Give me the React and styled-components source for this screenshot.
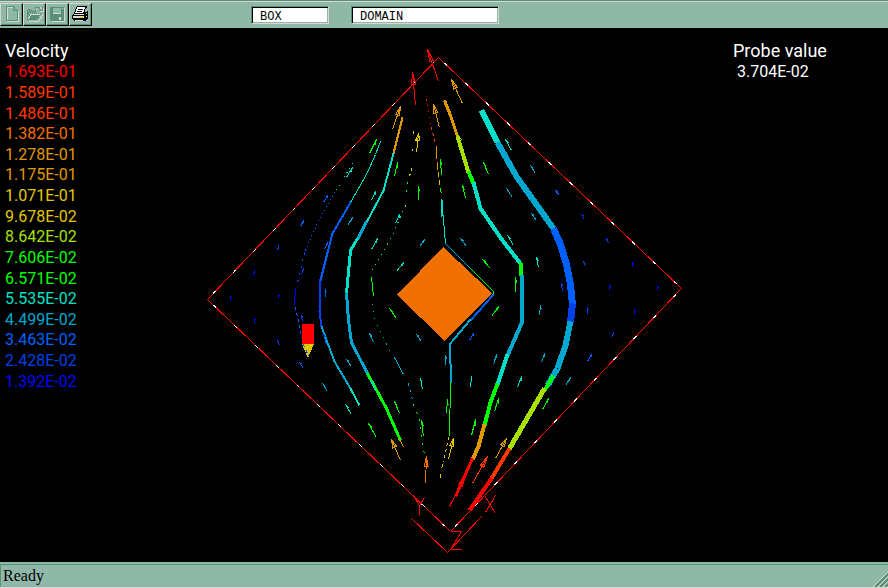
import React from "react";
import styled, { createGlobalStyle } from "styled-components";

const C = {
  red: "#ff0000",
  verm: "#ff3800",
  dorange: "#f07000",
  orange: "#e09800",
  yellow: "#e0c800",
  lime: "#a8e000",
  green: "#00ff00",
  teal: "#00e0c8",
  cyan: "#00a8d0",
  blue: "#0060ff",
  royal: "#0040e8",
  navy: "#0000ff",
};

const face = "#90b8a8";
const shade = "#589078";
const light = "#d8d8d0";

const GlobalStyle = createGlobalStyle`
  html, body { margin: 0; background: #000; }
  * { box-sizing: border-box; }
`;

const Window = styled.div`
  display: flex;
  flex-direction: column;
  height: 100vh;
  background: #000;
`;

const Toolbar = styled.header`
  display: flex;
  align-items: flex-start;
  height: 28px;
  padding-top: 2px;
  background: ${face};
  border-top: 1px solid ${shade};
  box-shadow: inset 0 1px 0 ${light};
`;

const ButtonRow = styled.div`
  display: flex;
  width: 92px;
`;

const ToolButton = styled.button`
  display: block;
  width: 23px;
  height: 23px;
  padding: 0;
  background: ${face};
  border: 1px solid;
  border-color: ${light} #000 #000 ${light};
  box-shadow: inset -1px -1px 0 ${shade};
`;

const Icon = styled.svg`
  display: block;
  width: 21px;
  height: 21px;
  shape-rendering: crispEdges;
`;

const Fields = styled.div`
  display: flex;
  gap: 22px;
  margin-left: 159px;
  padding-top: 3px;
`;

const Field = styled.input`
  width: ${(p) => p.$width}px;
  height: 18px;
  padding: 3px 0 0 8px;
  border: 1px solid;
  border-color: ${shade} ${light} ${light} ${shade};
  border-radius: 0;
  outline: 0;
  background: #fff;
  box-shadow: inset 1px 1px 0 #000, inset -1px -1px 0 ${face};
  color: #000;
  font: 12px "Liberation Mono", monospace;
`;

const Viewport = styled.main`
  flex: 1;
  min-height: 0;
  display: grid;
  grid-template-columns: 200px minmax(0, 1fr) 160px;
  background: #000;
  color: #fff;
  font: 18px/20px Roboto, "Liberation Sans", sans-serif;
`;

const Legend = styled.section`
  padding: 13px 0 0 5px;
`;

const Heading = styled.h2`
  margin: 0;
  font: inherit;
`;

const Scale = styled.ul`
  display: grid;
  grid-auto-rows: 1fr;
  align-items: center;
  height: 330px;
  margin: 1px 0 0;
  padding: 0;
  list-style: none;
`;

const Level = styled.li`
  color: ${(p) => p.$color};
  font-size: 16px;
`;

const Plot = styled.svg`
  display: block;
  width: 100%;
  height: 100%;
  min-height: 0;
  shape-rendering: crispEdges;
  fill: none;
`;

const Probe = styled.section`
  padding: 13px 0 0 5px;
`;

const ProbeValue = styled.output`
  display: block;
  margin-top: 1px;
  padding-left: 4px;
  font-size: 16px;
`;

const StatusBar = styled.footer`
  display: flex;
  align-items: flex-end;
  justify-content: space-between;
  height: 26px;
  padding-top: 2px;
  background: ${face};
  border-bottom: 1px solid ${light};
  font: 16px/22px "Liberation Serif", serif;
  color: #000;
`;

const StatusText = styled.div`
  flex: 1;
  height: 23px;
  padding-left: 2px;
  border-top: 1px solid ${shade};
  border-left: 1px solid ${shade};
`;

const Grip = styled.svg`
  width: 16px;
  height: 23px;
  border-top: 1px solid ${shade};
  shape-rendering: crispEdges;
`;

const levels = [
  ["1.693E-01", C.red],
  ["1.589E-01", C.verm],
  ["1.486E-01", C.verm],
  ["1.382E-01", C.dorange],
  ["1.278E-01", C.orange],
  ["1.175E-01", C.orange],
  ["1.071E-01", C.yellow],
  ["9.678E-02", C.yellow],
  ["8.642E-02", C.lime],
  ["7.606E-02", C.green],
  ["6.571E-02", C.green],
  ["5.535E-02", C.teal],
  ["4.499E-02", C.cyan],
  ["3.463E-02", C.blue],
  ["2.428E-02", C.royal],
  ["1.392E-02", C.navy],
];

// Ribbon pieces: colour, width, points, optional dash pattern.
const streams = [
  ["teal", 6, "481,110 497,142"],
  ["cyan", 6, "497,142 516,176 553,228"],
  ["blue", 7, "553,228 560,244 566,264 570,284 572,305"],
  ["royal", 7, "572,303 570,322"],
  ["cyan", 6, "570,321 565,345 557,368 547,385"],
  ["green", 4, "553,375 544,390"],
  ["lime", 5, "544,388 509,448"],
  ["verm", 4, "509,448 491,478"],
  ["red", 4, "491,478 469,510"],

  ["orange", 3, "444,100 450,115 457,136"],
  ["lime", 4, "457,136 468,172"],
  ["green", 4, "468,171 473,183"],
  ["teal", 4, "473,182 480,208 502,240 520,263"],
  ["green", 4, "520,262 521,275"],
  ["cyan", 4, "521,274 521,323 507,355"],
  ["teal", 4, "507,354 497,384"],
  ["green", 4, "497,383 490,402 484,425"],
  ["orange", 4, "484,424 478,446 472,459"],
  ["red", 3, "472,458 455,496"],

  ["red", 1, "426,99 428,114 431,128", "1 5"],
  ["verm", 1, "431,127 435,144", "3 3"],
  ["orange", 1, "436,146 437,170", "13 3"],
  ["yellow", 1, "438,172 440,188", "5 3"],
  ["green", 1, "440,188 441,195", "5 3"],
  ["teal", 2, "441,199 442,216"],
  ["teal", 1, "442,208 445,243"],
  ["cyan", 1, "445,243 470,268"],
  ["green", 1, "470,268 493,291 493,294"],
  ["blue", 2, "493,294 470,320"],
  ["cyan", 2, "470,319 449,344"],
  ["cyan", 2, "449,344 451,383"],
  ["green", 1, "450,382 449,436"],
  ["yellow", 1, "448,437 443,462", "3 3"],
  ["yellow", 1, "442,464 439,480", "4 6"],

  ["orange", 2, "402,117 393,153"],
  ["teal", 2, "393,153 383,190 366,222"],
  ["cyan", 3, "366,221 357,239"],
  ["teal", 3, "357,238 350,250 346,293"],
  ["cyan", 3, "346,293 348,320 351,342 367,373"],
  ["green", 3, "367,373 386,408 400,440"],
  ["orange", 1, "399,438 403,447"],

  ["teal", 1, "380,141 375,154 366,174 350,202"],
  ["blue", 2, "350,202 332,233 327,252 320,280"],
  ["royal", 2, "320,279 319,311 321,326"],
  ["cyan", 2, "321,326 334,361 350,388"],
  ["teal", 2, "350,388 359,405"],

  ["teal", 1, "352,163 335,191", "1 4"],
  ["blue", 1, "334,192 318,220 304,252", "1 3"],
  ["royal", 1, "304,252 300,270 296,286", "2 5"],
  ["navy", 1, "295,288 294,305"],
  ["blue", 1, "295,307 303,345 308,358", "3 3"],

  ["yellow", 1, "413,131 412,151", "3 15"],
  ["yellow", 1, "411,168 408,180", "2 4"],
  ["green", 1, "407,182 406,198", "2 6"],
  ["teal", 1, "405,205 390,239 371,270", "1 5"],
  ["green", 1, "371,277 373,296"],
  ["cyan", 1, "372,304 374,320 378,327 391,353", "1 6"],
  ["cyan", 1, "394,357 403,374"],
  ["cyan", 1, "408,383 413,404", "2 5"],
  ["green", 1, "413,404 419,419 424,455", "2 6"],
];

// Velocity vectors: colour, tail x, tail y, head x, head y.
const vectors = [
  ["red", 438, 81, 427, 49], ["red", 415, 105, 412, 72],
  ["orange", 392, 129, 400, 106], ["orange", 439, 127, 433, 104],
  ["orange", 462, 103, 451, 79], ["lime", 463, 151, 457, 134],
  ["yellow", 416, 152, 418, 133], ["green", 369, 153, 376, 139],
  ["green", 394, 176, 397, 162], ["green", 441, 175, 440, 159],
  ["green", 418, 199, 418, 186], ["green", 488, 174, 483, 162],
  ["green", 465, 198, 462, 185], ["teal", 346, 177, 352, 167],
  ["teal", 371, 200, 375, 191], ["teal", 395, 223, 399, 214],
  ["teal", 511, 150, 505, 139], ["cyan", 535, 173, 530, 165],
  ["cyan", 512, 197, 506, 188], ["cyan", 536, 220, 531, 213],
  ["cyan", 347, 225, 352, 217], ["teal", 513, 245, 507, 235],
  ["blue", 323, 202, 327, 195], ["blue", 300, 226, 303, 220],
  ["royal", 277, 250, 278, 246], ["navy", 253, 275, 254, 271],
  ["navy", 230, 299, 230, 296], ["navy", 278, 297, 278, 294],
  ["royal", 301, 274, 303, 268], ["blue", 324, 249, 327, 242],
  ["blue", 325, 296, 325, 289], ["teal", 371, 249, 377, 238],
  ["navy", 254, 322, 254, 318], ["royal", 279, 345, 277, 340],
  ["blue", 303, 368, 299, 362], ["royal", 302, 321, 301, 315],
  ["cyan", 327, 391, 322, 383], ["teal", 351, 414, 345, 404],
  ["green", 376, 437, 368, 423], ["orange", 400, 460, 391, 439],
  ["green", 396, 318, 389, 308], ["cyan", 373, 342, 369, 333],
  ["cyan", 351, 366, 346, 359], ["teal", 375, 390, 370, 380],
  ["green", 399, 413, 394, 401], ["blue", 326, 344, 323, 333],
  ["teal", 396, 271, 403, 262], ["cyan", 419, 246, 424, 239],
  ["cyan", 466, 246, 460, 238], ["green", 490, 268, 482, 259],
  ["teal", 538, 267, 536, 257], ["green", 515, 291, 515, 277],
  ["green", 491, 316, 498, 306], ["cyan", 539, 315, 540, 305],
  ["royal", 562, 291, 561, 283], ["royal", 585, 266, 583, 261],
  ["royal", 587, 313, 587, 308], ["cyan", 421, 341, 416, 334],
  ["blue", 469, 340, 473, 333], ["cyan", 445, 364, 445, 355],
  ["cyan", 493, 364, 496, 354], ["cyan", 541, 362, 544, 353],
  ["teal", 422, 389, 420, 378], ["teal", 470, 387, 471, 376],
  ["teal", 517, 387, 521, 376], ["cyan", 565, 385, 570, 377],
  ["blue", 587, 361, 591, 354], ["green", 423, 436, 421, 420],
  ["green", 446, 413, 447, 399], ["green", 471, 435, 475, 419],
  ["green", 494, 411, 498, 398], ["green", 542, 409, 548, 398],
  ["yellow", 448, 459, 453, 438], ["orange", 495, 458, 506, 438],
  ["dorange", 425, 483, 426, 456], ["verm", 472, 483, 487, 456],
  ["red", 449, 506, 466, 473], ["blue", 559, 195, 555, 190],
  ["royal", 584, 219, 581, 214], ["royal", 608, 243, 606, 238],
  ["navy", 632, 266, 632, 262], ["navy", 657, 289, 657, 286],
  ["navy", 609, 289, 609, 285], ["navy", 634, 313, 634, 309],
  ["royal", 611, 337, 613, 332],
];

// Shaft plus a slim open head; short vectors get a single barb.
function vectorPath([, x1, y1, x2, y2]) {
  const dx = x2 - x1;
  const dy = y2 - y1;
  const len = Math.hypot(dx, dy);
  const shaft = `M${x1} ${y1}L${x2} ${y2}`;
  const side = len > 18 ? 2 : 1;
  const bx = x2 - dx * 0.36;
  const by = y2 - dy * 0.36;
  const nx = (-dy / len) * side;
  const ny = (dx / len) * side;
  if (len < 18) return `${shaft}L${bx + nx} ${by + ny}`;
  return `${shaft}L${bx + nx} ${by + ny}L${bx - nx} ${by - ny}L${x2} ${y2}`;
}

const edges = [
  "M207 299L438 57",
  "M438 57L681 288",
  "M681 288L450 531",
  "M207 299L450 531",
];

function FlowPlot() {
  return (
    <Plot viewBox="200 28 528 534" role="img" aria-label="Velocity streamlines around a square box">
      <path d="M443 247L492 293L445 341L397 295Z" fill={C.dorange} />
      <g transform="translate(.5 .5)">
        {edges.map((d) => (
          <g key={d}>
            <path d={d} stroke={C.red} />
            <path d={d} stroke="#fff" strokeDasharray="4 24.8" strokeDashoffset="-8" />
          </g>
        ))}
        {streams.map(([c, w, pts, dash]) => (
          <polyline key={c + pts} points={pts} stroke={C[c]} strokeWidth={w} strokeDasharray={dash} />
        ))}
        {vectors.map((v) => (
          <path key={v.join()} d={vectorPath(v)} stroke={C[v[0]]} />
        ))}
        <path
          stroke={C.red}
          d="M411 518L447 552L481 516M414 497L419 505L424 497M419 505V514M484 495L495 513M495 495L485 512M450 531H461L450 549H461"
        />
      </g>
      <path d="M302 324h12v20h-12Z" fill={C.red} />
      <path d="M302 344h12l-6 14Z" fill={C.yellow} />
      <path d="M303.500 344.500L308.500 356" stroke={C.blue} strokeDasharray="3 3" />
    </Plot>
  );
}

const NewIcon = () => (
  <Icon viewBox="0 0 21 21" fill="none">
    <path d="M6.500 3.500H13.500L17.500 7.500V17.500H6.500Z" stroke={light} />
    <path d="M5.500 2.500H12.500L16.500 6.500V16.500H5.500ZM12.500 2.500V6.500H16.500" stroke={shade} />
  </Icon>
);

const OpenIcon = () => (
  <Icon viewBox="0 0 21 21" fill="none">
    <path d="M4.500 17.500H14.500L19 10.500M12 4.500L14 3.500H16L18.500 6.500M16 7.500H19.500V4" stroke={light} />
    <path d="M3 6H4V5H7V6H12V9H17V10L13 16H3Z" fill={shade} />
    <path d="M4 6.500H11M5 8.500H11M4 11.500L6 9.500H16" stroke={face} strokeDasharray="1 1" />
    <path d="M4 15L7 10.500H16" stroke={light} />
    <path d="M11 4.500L12 3.500H15L17.500 6.500M15 6.500H18.500V3" stroke={shade} />
  </Icon>
);

const SaveIcon = () => (
  <Icon viewBox="0 0 21 21">
    <path d="M4 4H18V18H5V17H4Z" fill={light} />
    <path d="M3 3H17V17H4L3 16Z" fill={shade} />
    <path d="M6 4H14V10H6Z" fill={face} />
    <path d="M6 9H14V10H6ZM15 4H16V5H15ZM12 13H14V16H12Z" fill={light} />
  </Icon>
);

const PrintIcon = () => (
  <Icon viewBox="0 0 21 21">
    <path d="M2 11L5 8H15L18 7V14L15 17H4L2 15Z" fill="#000" />
    <path d="M7 2H17V4H16L14 9H4L6 4Z" fill="#000" />
    <path d="M7 3H15V4L13 9H5L7 4Z" fill="#fff" />
    <path d="M8 5H13V6H8ZM7 7H12V8H7Z" fill="#000" />
    <path d="M4 10H14V11H3ZM3 12H14V14H3ZM5 16H13V17H5ZM16 9H17V10H16ZM16 12H17V13H16Z" fill={light} />
    <path d="M10 13H13V14H10Z" fill="#d8c800" />
  </Icon>
);

export default function App() {
  return (
    <>
      <GlobalStyle />
      <Window>
        <Toolbar>
          <ButtonRow>
            <ToolButton aria-label="New" disabled><NewIcon /></ToolButton>
            <ToolButton aria-label="Open" disabled><OpenIcon /></ToolButton>
            <ToolButton aria-label="Save" disabled><SaveIcon /></ToolButton>
            <ToolButton aria-label="Print"><PrintIcon /></ToolButton>
          </ButtonRow>
          <Fields>
            <Field aria-label="Object type" defaultValue="BOX" $width={78} />
            <Field aria-label="Object name" defaultValue="DOMAIN" $width={148} />
          </Fields>
        </Toolbar>
        <Viewport>
          <Legend>
            <Heading>Velocity</Heading>
            <Scale>
              {levels.map(([value, color]) => (
                <Level key={value} $color={color}>{value}</Level>
              ))}
            </Scale>
          </Legend>
          <FlowPlot />
          <Probe>
            <Heading>Probe value</Heading>
            <ProbeValue>3.704E-02</ProbeValue>
          </Probe>
        </Viewport>
        <StatusBar>
          <StatusText>Ready</StatusText>
          <Grip viewBox="0 0 16 22" aria-hidden="true">
            <path d="M1 22L16 7M6 22L16 12M11 22L16 17" stroke={light} />
            <path d="M3 22L16 9M8 22L16 14M13 22L16 19" stroke={shade} strokeWidth="2" />
          </Grip>
        </StatusBar>
      </Window>
    </>
  );
}
